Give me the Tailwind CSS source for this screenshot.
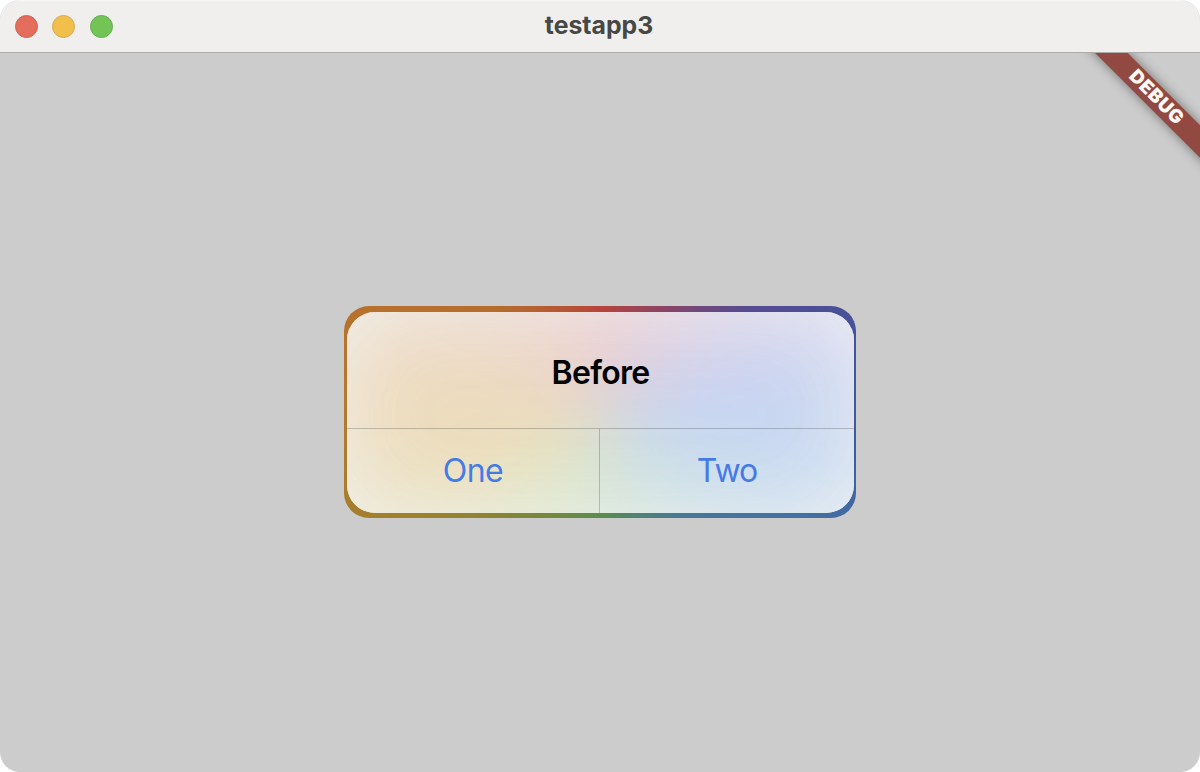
<!doctype html>
<html lang="en">
    <head>
        <meta charset="UTF-8" />
        <meta name="viewport" content="width=device-width, initial-scale=1.0" />
        <title>testapp3</title>
        <script src="https://cdn.jsdelivr.net/npm/@tailwindcss/browser@4"></script>
    </head>

    <body class="bg-white">
        <div class="flex flex-col w-[1200px] h-[772px] rounded-[20px] overflow-hidden bg-[#cccccc] font-[Inter,sans-serif]">
            <header class="grid grid-cols-3 items-center h-[53px] px-[15px] bg-[#f0efed] border-t border-t-[#f8f8f7] border-b border-b-[#adadac]">
                <div class="flex gap-[14.4px]">
                    <span class="size-[23px] rounded-full bg-[#e46d5c] border border-[#cf6456]"></span>
                    <span class="size-[23px] rounded-full bg-[#f0bf4c] border border-[#d3aa51]"></span>
                    <span class="size-[23px] rounded-full bg-[#72c455] border border-[#65ad50]"></span>
                </div>
                <h1 class="text-center text-[24.8px] leading-none font-bold text-[#474746] pb-[2px] pr-[2px]">testapp3</h1>
            </header>
            <main class="relative flex-1 flex justify-center items-start pt-[253px] overflow-hidden">
                <!-- debug banner -->
                <div class="absolute left-[1035.5px] top-[33px] w-[240px] h-[22.5px] rotate-45 bg-[#924942] shadow-[0_0_12px_rgba(0,0,0,0.45)] flex items-center justify-center">
                    <span class="text-[18.8px] leading-none font-black tracking-[0.7px] text-[#fff9f5] pt-px pl-px">DEBUG</span>
                </div>

                <!-- dialog -->
                <div class="w-[512px] h-[212px] pt-[6px] pb-[5px] pl-[3px] pr-[2px] rounded-[25px] bg-[conic-gradient(#b8443a_0deg,#8c4465_32deg,#574b91_55deg,#41549c_75deg,#3e5da0_100deg,#4573a2_120deg,#487896_142deg,#5c8d4b_180deg,#7f8638_218deg,#9e812d_240deg,#b27b2d_265deg,#b8722c_290deg,#b56c2d_315deg,#b8443a_360deg)]">
                    <div class="relative h-full rounded-[28px] overflow-hidden bg-[#e8e4e0]">
                        <!-- frosted backdrop -->
                        <div class="absolute -inset-[100px] blur-[38px] bg-[conic-gradient(#ecc8ca_0deg,#dfcdda_35deg,#d3cfed_58deg,#cbd3f1_74deg,#c6d6f2_92deg,#c6daf1_110deg,#cbdfe6_135deg,#d2e5ce_180deg,#e0e5c2_218deg,#ecdfbc_245deg,#eddcbb_268deg,#edd9c1_290deg,#ecd6c8_315deg,#ecc8ca_360deg)]"></div>
                        <div class="absolute inset-0 rounded-[28px] shadow-[inset_0_0_100px_-8px_rgba(242,243,243,0.95)]"></div>

                        <div class="relative flex flex-col h-full">
                            <div class="h-[116px] flex items-center justify-center pt-[5px]">
                                <h2 class="text-[32px] leading-none font-semibold tracking-[-0.7px] text-black">Before</h2>
                            </div>
                            <div class="flex-1 flex border-t border-black/20">
                                <button class="w-[252px] text-[32px] leading-none tracking-[-0.5px] text-[#457be6]">One</button>
                                <button class="flex-1 border-l border-black/20 text-[32px] leading-none tracking-[-1px] text-[#457be6]">Two</button>
                            </div>
                        </div>
                    </div>
                </div>
            </main>
        </div>
    </body>
</html>
